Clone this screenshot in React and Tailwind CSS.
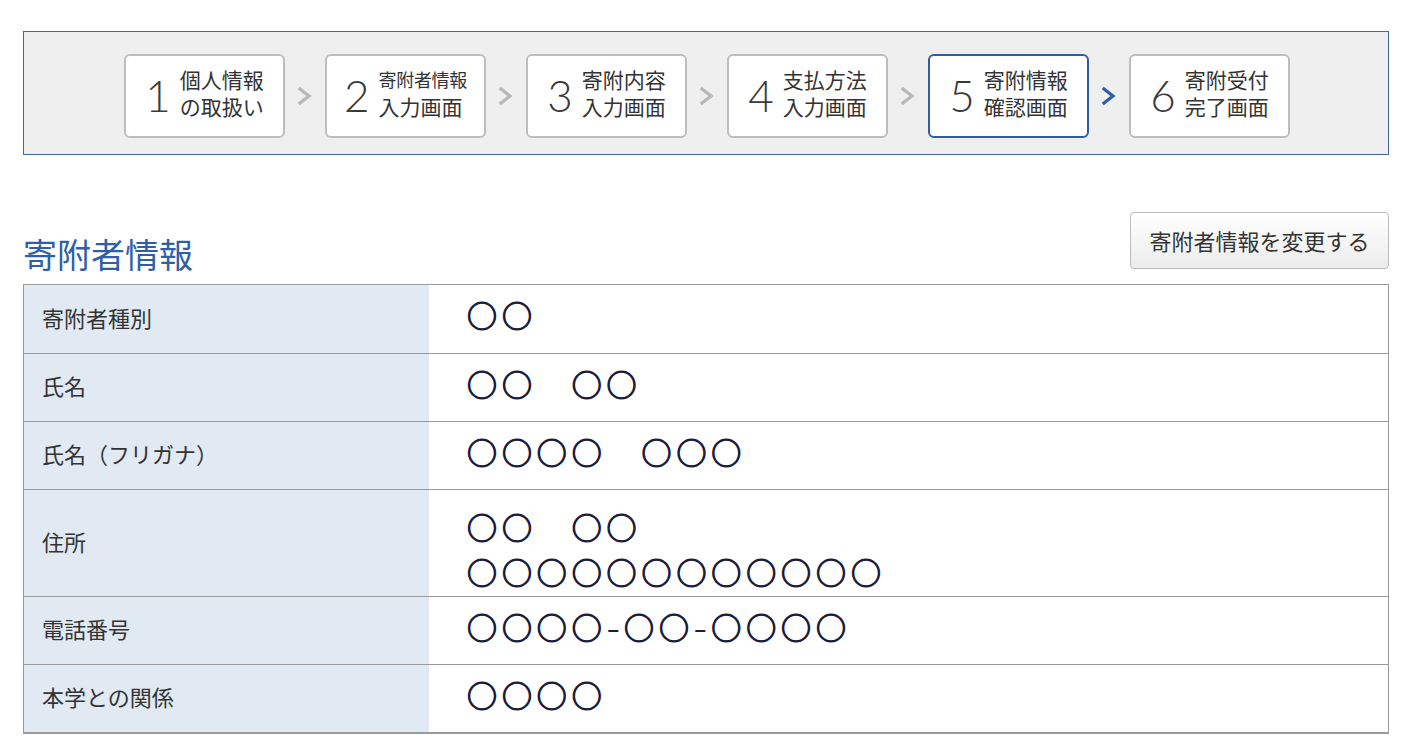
import React from "react";

const steps = [
  { n: "1", a: "個人情報", b: "の取扱い" },
  { n: "2", a: "寄附者情報", b: "入力画面", small: true },
  { n: "3", a: "寄附内容", b: "入力画面" },
  { n: "4", a: "支払方法", b: "入力画面" },
  { n: "5", a: "寄附情報", b: "確認画面", active: true },
  { n: "6", a: "寄附受付", b: "完了画面" },
];

const rows = [
  { label: "寄附者種別", lines: ["○○"] },
  { label: "氏名", lines: ["○○　○○"] },
  { label: "氏名（フリガナ）", lines: ["○○○○　○○○"] },
  { label: "住所", lines: ["○○　○○", "○○○○○○○○○○○○"], tall: true },
  { label: "電話番号", lines: ["○○○○-○○-○○○○"] },
  { label: "本学との関係", lines: ["○○○○"] },
];

function Chevron({ active }) {
  return (
    <svg width="40" height="30" viewBox="0 0 40 30" className="shrink-0">
      <path
        d="M15 8 L24 15 L15 22"
        fill="none"
        stroke={active ? "#2d5da6" : "#b8b8b8"}
        strokeWidth="3.2"
        strokeLinecap="square"
        strokeLinejoin="miter"
      />
    </svg>
  );
}

function ValueLine({ text }) {
  const parts = text.split("-");
  return (
    <div className="text-[30px] leading-[45px] tracking-[4.9px] whitespace-pre">
      {parts.map((p, i) => (
        <React.Fragment key={i}>
          {i > 0 && (
            <span className="tracking-normal ml-[1px] mr-[6px] inline-block scale-x-[1.3]">-</span>
          )}
          <span className="[-webkit-text-stroke:1.2px_#1c1c3c]">{p}</span>
        </React.Fragment>
      ))}
    </div>
  );
}

export default function App() {
  return (
    <div
      className="w-[1417px] h-[754px] bg-white overflow-hidden text-[#333]"
      style={{ fontFamily: '"Noto Sans CJK JP", "Noto Sans", sans-serif' }}
    >
      <div className="pt-[31px] px-[23px] w-[1412px]">
        <div className="h-[124px] border border-[#3d65a8] bg-[#efefef] flex items-center justify-center pl-[2px] pt-[6px]">
          {steps.map((s, i) => (
            <React.Fragment key={s.n}>
              {i > 0 && <Chevron active={s.n === "6"} />}
              <div
                className={`w-[161px] h-[84px] rounded-[6px] bg-white flex items-center justify-center gap-[9px] border-2 ${
                  s.active ? "border-[#2d5da6]" : "border-[#bdbdbd]"
                }`}
              >
                <span
                  className="text-[44px] leading-none font-light text-[#3a3a3a] pb-[2px]"
                  style={{ fontFamily: 'Lato, "Liberation Sans", Arial, sans-serif' }}
                >
                  {s.n}
                </span>
                <span className="flex flex-col text-[21px] leading-[27px] text-[#333] pb-[7px]">
                  <span className={s.small ? "text-[18px] tracking-[-0.3px]" : ""}>{s.a}</span>
                  <span>{s.b}</span>
                </span>
              </div>
            </React.Fragment>
          ))}
        </div>
      </div>

      <div className="px-[23px] w-[1412px] mt-[57px] flex items-end justify-between">
        <h2 className="text-[34px] leading-[40px] text-[#2e5fa8] font-normal pb-[10px]">
          寄附者情報
        </h2>
        <button className="w-[259px] h-[57px] rounded-[4px] border border-[#bbbbbb] bg-gradient-to-b from-white to-[#ececec] text-[22px] text-[#333] mb-[15px]">
          寄附者情報を変更する
        </button>
      </div>

      <div className="mx-[23px] w-[1366px] border border-[#9a9a9a] border-b-2">
        {rows.map((r, i) => (
          <div
            key={r.label}
            className={`flex ${i > 0 ? "border-t border-[#9a9a9a]" : ""} ${
              r.tall ? "h-[107px]" : "h-[68px]"
            }`}
          >
            <div className="w-[405px] bg-[#e1e9f3] flex items-center pl-[18px] pb-[4px] text-[22px] text-[#333]">
              {r.label}
            </div>
            <div
              className={`flex-1 flex flex-col justify-center pl-[38px] text-[#1c1c3c] ${
                r.tall ? "pt-[11px]" : "pb-[9px]"
              }`}
            >
              {r.lines.map((l, j) => (
                <ValueLine key={j} text={l} />
              ))}
            </div>
          </div>
        ))}
      </div>
    </div>
  );
}
